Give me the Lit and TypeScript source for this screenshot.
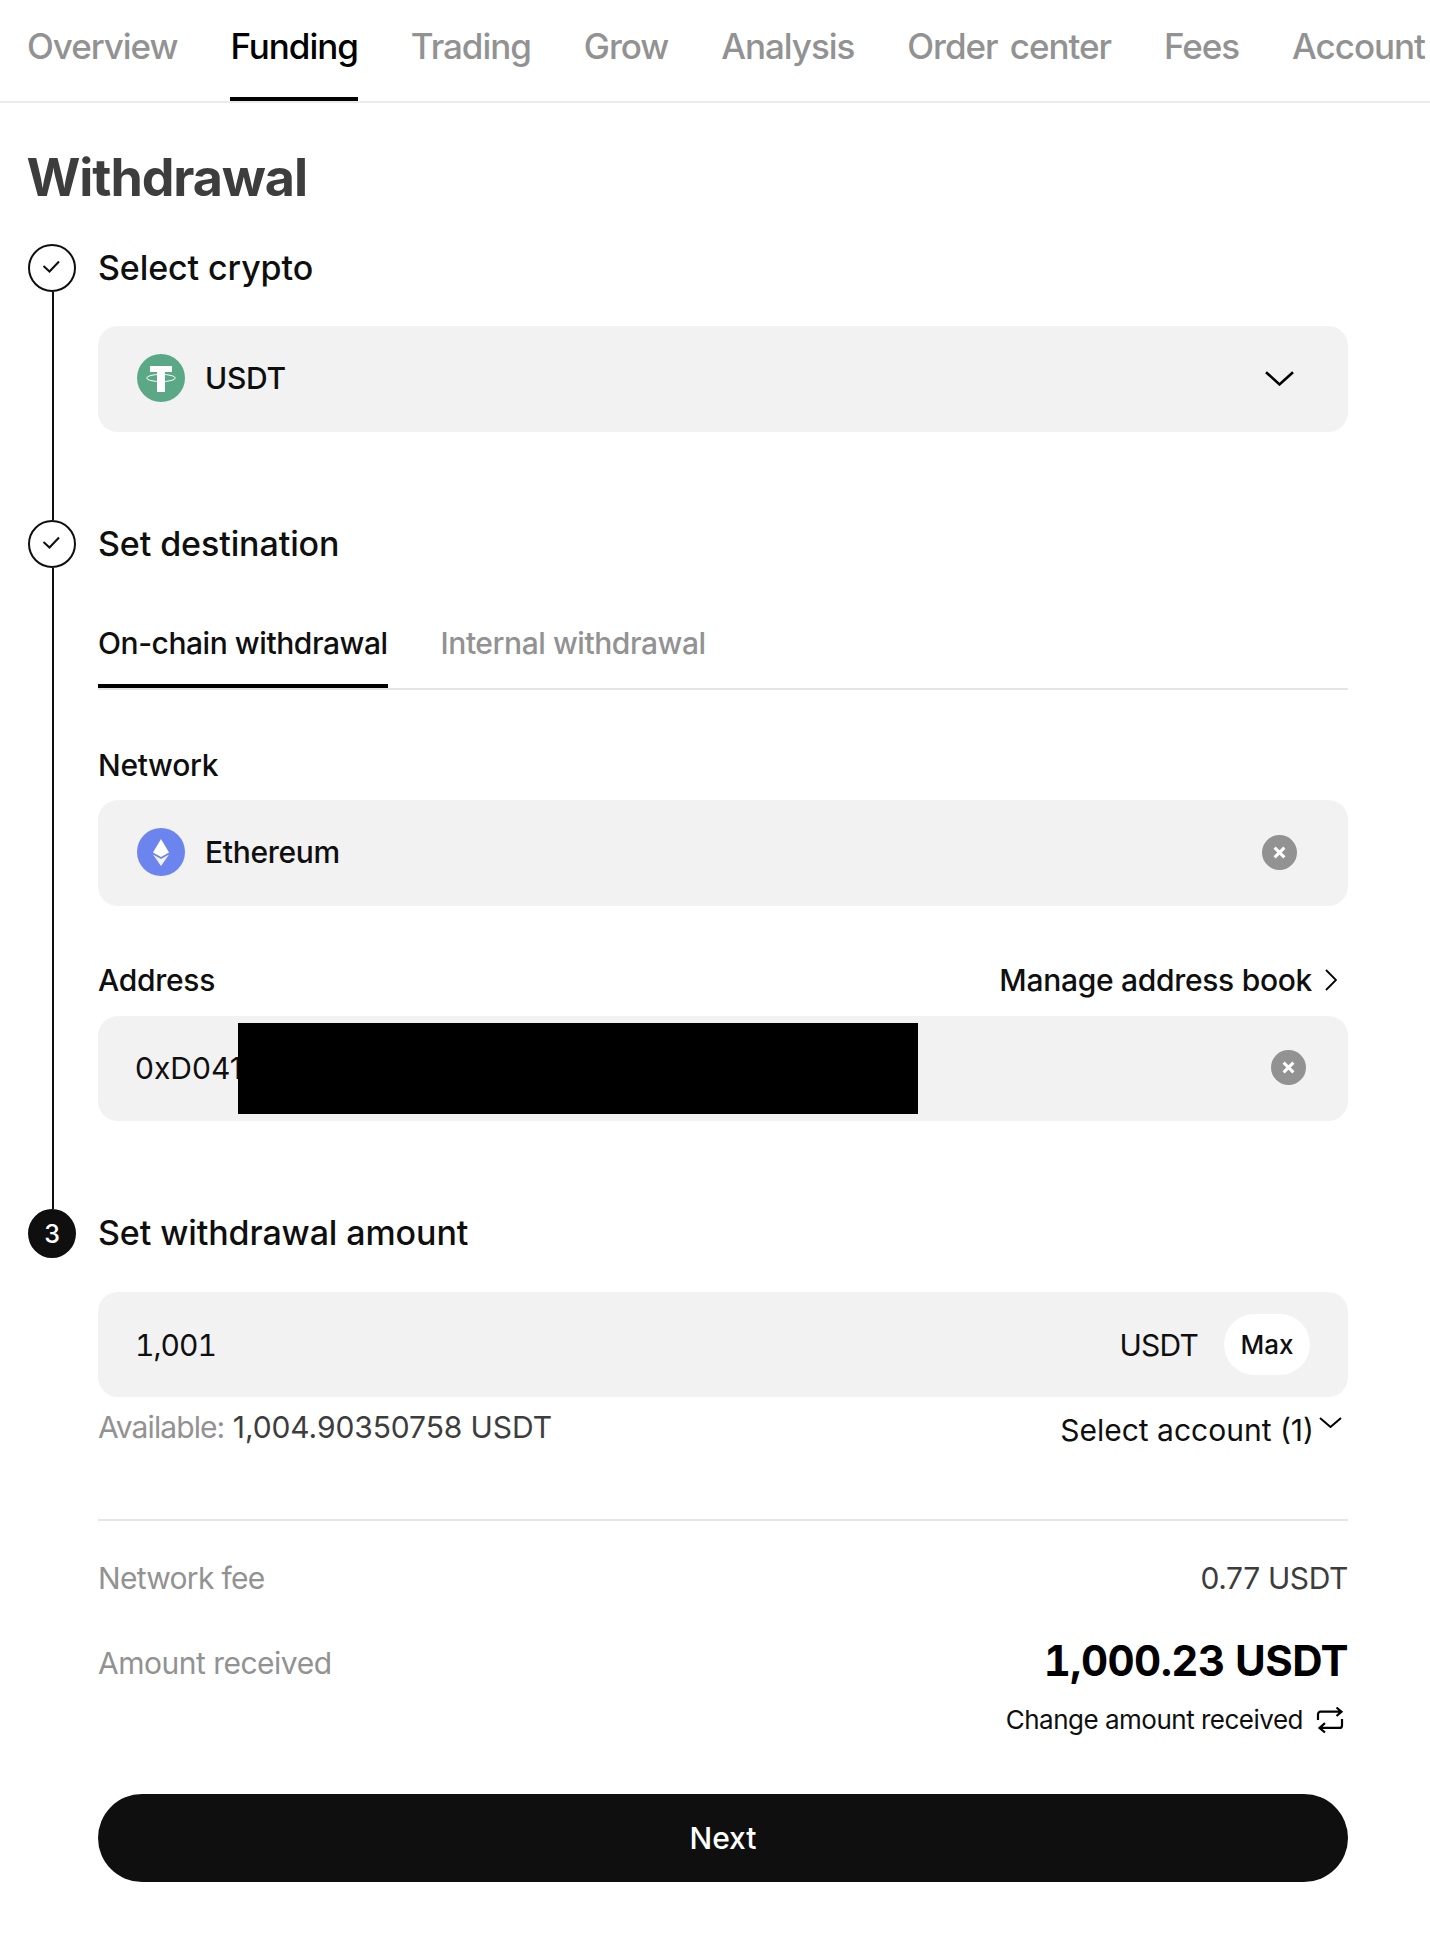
import { LitElement, html, css, svg } from "lit";
import { customElement } from "lit/decorators.js";

const check = svg`<path d="M7.5 14 L13.5 19.5 L23 9.5" fill="none" stroke="#0f0f0f" stroke-width="2"/>`;
const chevDown = html`<svg class="chev" viewBox="0 0 29 15"><path d="M1 1.2 L14.5 13.4 L28 1.2" fill="none" stroke="#000" stroke-width="2.6"/></svg>`;
const clear = html`<svg class="clear" viewBox="0 0 35 35"><circle cx="17.5" cy="17.5" r="17.5" fill="#929292"/><path d="M12.6 12.6 L22.4 22.4 M22.4 12.6 L12.6 22.4" stroke="#fff" stroke-width="3"/></svg>`;
const tether = html`<svg class="coin" viewBox="0 0 48 48"><circle cx="24" cy="24" r="24" fill="#5aa886"/><path d="M13 12 H35 V18 H28 V38 H20 V18 H13 Z" fill="#fff"/><ellipse cx="24" cy="24" rx="14.3" ry="3.6" fill="none" stroke="#fff" stroke-width="1"/></svg>`;
const eth = html`<svg class="coin" viewBox="0 0 48 48"><circle cx="24" cy="24" r="24" fill="#6c85ee"/><path d="M24 11 L32 24.4 L24 29 L16 24.4 Z" fill="#fff"/><path d="M16 26.4 L24 31 L32 26.4 L24 38 Z" fill="#fff" opacity=".9"/></svg>`;

@customElement("app-root")
export class AppRoot extends LitElement {
  static styles = css`
    :host { display: block; width: 1430px; height: 1946px; overflow: hidden; background: #fff;
      font-family: Inter, "Liberation Sans", sans-serif; color: #0f0f0f; }
    .nav { display: flex; gap: 53px; padding: 0 27px; height: 101px; border-bottom: 2px solid #ebebeb; white-space: nowrap; }
    .nav a { box-sizing: border-box; height: 101px; line-height: 92px; font-size: 35px; font-weight: 500; color: #929292; letter-spacing: -1.05px; word-spacing: 4px; }
    .nav a.on { color: #000; border-bottom: 4px solid #000; }
    main { padding: 0 82px 0 28px; }
    h1 { margin: 0 0 0 -1.5px; padding-top: 35px; height: 141px; box-sizing: border-box; line-height: 80px; font-size: 52px; font-weight: 700; color: #3d3d3d; letter-spacing: -1.1px; }
    .step { display: grid; grid-template-columns: 48px 1fr; column-gap: 22px; }
    .s1 { height: 276px; } .s2 { height: 689px; }
    .rail { display: flex; flex-direction: column; align-items: center; }
    .dot { box-sizing: border-box; flex: none; width: 48px; height: 48px; border-radius: 50%; border: 2px solid #0f0f0f; display: flex; align-items: center; justify-content: center; }
    .dot svg { width: 32px; height: 32px; flex: none; }
    .dot.cur { background: #0f0f0f; color: #fff; font-size: 25px; font-weight: 500; height: 49px; }
    .line { flex: 1; width: 2px; margin-left: 2px; background: #0f0f0f; }
    h2 { margin: 0; font-size: 34px; line-height: 48px; font-weight: 500; letter-spacing: -0.1px; }
    .panel { box-sizing: border-box; height: 105px; border-radius: 20px; background: #f2f2f2; display: flex; align-items: center; font-size: 30px; }
    .p106 { height: 106px; }
    .sel { padding: 0 54px 2px 39px; margin-top: 34px; font-weight: 500; letter-spacing: -0.3px; }
    .net { margin-top: 0; padding-right: 51px; }
    .coin { width: 48px; height: 48px; flex: none; margin-right: 20px; }
    .grow { flex: 1; }
    .chev { width: 29px; height: 15px; }
    .clear { width: 35px; height: 35px; flex: none; }
    .tabs { margin-top: 40px; display: flex; gap: 53px; border-bottom: 2px solid #e5e5e5; font-size: 30px; font-weight: 500; height: 82px; box-sizing: border-box; letter-spacing: -0.45px; }
    .tabs span { box-sizing: border-box; height: 80px; line-height: 70px; color: #929292; }
    .tabs span.on { color: #0f0f0f; border-bottom: 4px solid #000; }
    .lab { display: flex; justify-content: space-between; align-items: center; line-height: 36px; font-size: 30px; font-weight: 500; letter-spacing: -0.3px; }
    .lab-net { margin-top: 57px; margin-bottom: 17px; }
    .lab-addr { margin-top: 56px; margin-bottom: 18px; }
    .lab a { display: flex; align-items: center; }
    .lab svg { width: 12px; height: 22px; margin: 0 11px 0 13px; }
    .addr { position: relative; padding: 0 42px 2px 37px; font-weight: 400; }
    .mask { position: absolute; left: 140px; top: 7px; width: 680px; height: 91px; background: #000; }
    .amt { padding: 0 38px 0 37px; margin-top: 35px; }
    .amt .val { font-feature-settings: "tnum"; letter-spacing: -1px; }
    .amt .cur { letter-spacing: -0.8px; }
    .pill { width: 86px; height: 61px; border-radius: 31px; background: #fff; margin-left: 26px; display: flex; align-items: center; justify-content: center; font-size: 26px; font-weight: 500; }
    .avail { display: flex; justify-content: space-between; align-items: flex-start; height: 43px; margin-top: 10px; font-size: 30px; line-height: 40px; }
    .gray { color: #929292; }
    .mid { color: #3d3d3d; }
    .t-av { letter-spacing: -0.9px; }
    .t-val { letter-spacing: -0.1px; }
    .t-fee { letter-spacing: -0.7px; }
    .t-rec { letter-spacing: -0.5px; padding-top: 4px; }
    .acct { display: flex; align-items: center; margin-top: 3px; }
    .acct svg { width: 23px; height: 11px; margin: -16px 6px 0 5px; }
    .div { margin-top: 69px; height: 2px; background: #e5e5e5; }
    .row { display: flex; justify-content: space-between; align-items: center; font-size: 30px; line-height: 40px; }
    .r1 { margin-top: 37px; }
    .r2 { margin-top: 38px; }
    .big { font-size: 42px; font-weight: 700; line-height: 50px; color: #000; letter-spacing: -0.6px; font-feature-settings: "tnum"; }
    .fee { letter-spacing: -0.4px; }
    .change { margin-top: 16px; display: flex; justify-content: flex-end; align-items: center; font-size: 26px; line-height: 36px; height: 36px; letter-spacing: -0.5px; }
    .change svg { width: 26px; height: 26px; margin: 0 5px 0 14px; overflow: visible; }
    .btn { margin-top: 56px; height: 88px; border-radius: 44px; background: #0f0f0f; color: #fff; display: flex; align-items: center; justify-content: center; font-size: 30px; font-weight: 500; }
  `;

  render() {
    return html`
      <div class="nav">
        ${["Overview", "Funding", "Trading", "Grow", "Analysis", "Order center", "Fees", "Account"].map(
          (t) => html`<a class=${t === "Funding" ? "on" : ""}>${t}</a>`
        )}
      </div>
      <main>
        <h1>Withdrawal</h1>
        <section class="step s1">
          <div class="rail"><div class="dot"><svg viewBox="0 0 32 32">${check}</svg></div><div class="line"></div></div>
          <div>
            <h2>Select crypto</h2>
            <div class="panel p106 sel">${tether}<span>USDT</span><span class="grow"></span>${chevDown}</div>
          </div>
        </section>
        <section class="step s2">
          <div class="rail"><div class="dot"><svg viewBox="0 0 32 32">${check}</svg></div><div class="line"></div></div>
          <div>
            <h2>Set destination</h2>
            <div class="tabs"><span class="on">On-chain withdrawal</span><span>Internal withdrawal</span></div>
            <div class="lab lab-net"><span>Network</span></div>
            <div class="panel p106 sel net">${eth}<span>Ethereum</span><span class="grow"></span>${clear}</div>
            <div class="lab lab-addr"><span>Address</span>
              <a>Manage address book<svg viewBox="0 0 12 22"><path d="M1 1 L11 11 L1 21" fill="none" stroke="#000" stroke-width="1.8"/></svg></a></div>
            <div class="panel addr"><span>0xD041</span><span class="mask"></span><span class="grow"></span>${clear}</div>
          </div>
        </section>
        <section class="step">
          <div class="rail"><div class="dot cur">3</div></div>
          <div>
            <h2>Set withdrawal amount</h2>
            <div class="panel amt"><span class="val">1,001</span><span class="grow"></span><span class="cur">USDT</span><span class="pill">Max</span></div>
            <div class="avail">
              <div><span class="gray t-av">Available:</span> <span class="mid t-val">1,004.90350758 USDT</span></div>
              <div class="acct">Select account (1)<svg viewBox="0 0 23 11"><path d="M1 1 L11.5 10 L22 1" fill="none" stroke="#000" stroke-width="2"/></svg></div>
            </div>
            <div class="div"></div>
            <div class="row r1"><span class="gray t-fee">Network fee</span><span class="mid fee">0.77 USDT</span></div>
            <div class="row r2"><span class="gray t-rec">Amount received</span><span class="big">1,000.23 USDT</span></div>
            <div class="change">Change amount received<svg viewBox="0 0 26 26"><path d="M1 13 V7.2 A2.5 2.5 0 0 1 3.5 4.7 H24.5 M19.5 .5 L24.5 4.7 L19.5 9 M25 12 V18.4 A2.5 2.5 0 0 1 22.5 20.9 H2.5 M8 16.2 L2.5 20.9 L8 25.5" fill="none" stroke="#000" stroke-width="2.2"/></svg></div>
            <div class="btn">Next</div>
          </div>
        </section>
      </main>
    `;
  }
}
